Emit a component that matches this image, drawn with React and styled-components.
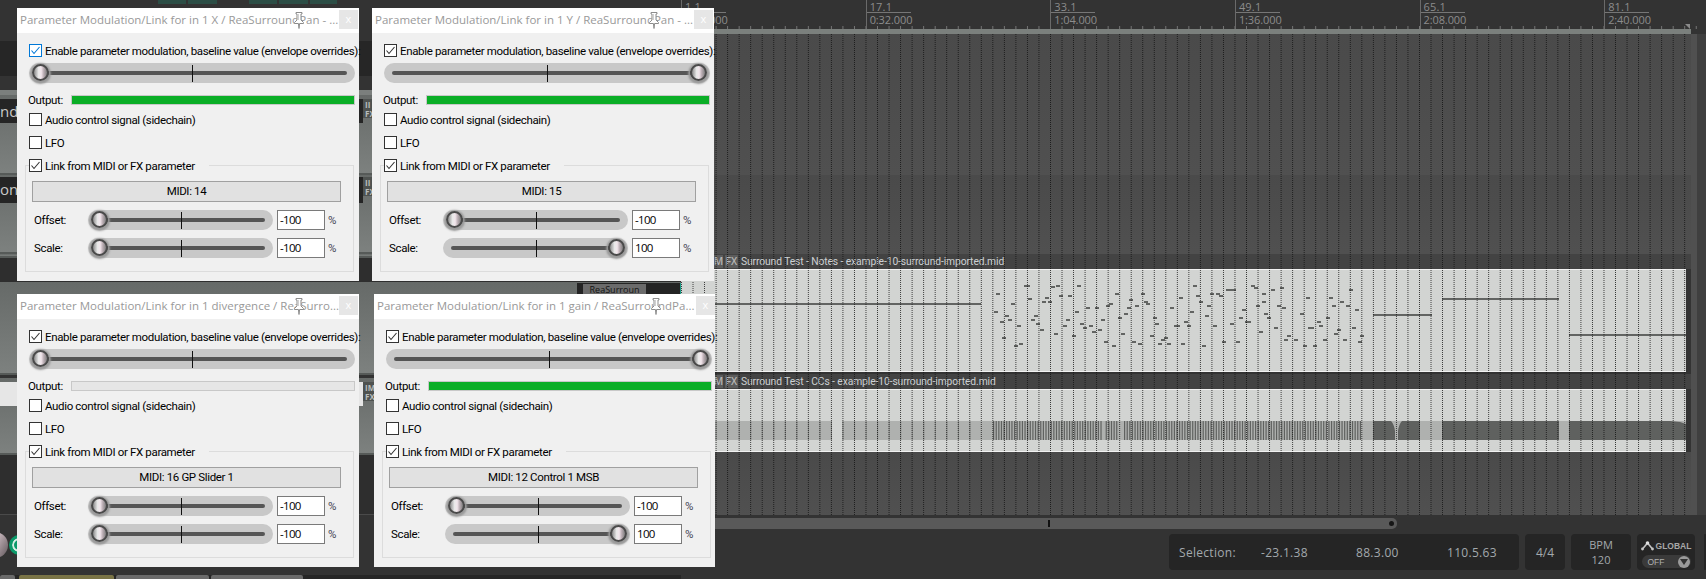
import React from "react";
import styled, { createGlobalStyle } from "styled-components";

const GlobalStyle = createGlobalStyle`
  html, body { margin: 0; padding: 0; background: #333; overflow: hidden; }
  * { box-sizing: border-box; }
`;

const BAR = 11.54;
const UI_FONT = `"Open Sans", "Liberation Sans", sans-serif`;
const DIALOG_FONT = `Roboto, "Open Sans", sans-serif`;

/* note positions read off the midi item: [x, y, width] */
const NOTES = [
  [996,293],[1024,285,6],[1028,298],[1011,303],[994,311],[1005,315],[1008,319],[1000,321],[1017,325],[1002,337],[1014,345],[1019,343],
  [1034,315],[1031,319],[1036,323],[1040,329],[1042,301],[1045,297],[1048,301],[1051,286],[1056,285],[1059,295],[1068,295],[1077,285],
  [1075,311],[1066,319],[1063,325],[1054,333],[1072,335],[1080,323],[1083,327],[1089,325],[1092,331],[1098,329],[1101,319],[1086,307],
  [1095,307],[1106,305],[1109,303],[1115,293],[1118,317],[1124,313],[1127,307],[1129,299],[1135,305],[1141,293],[1144,301],[1146,303],
  [1121,333],[1104,341],[1112,345],[1132,341],[1138,343],[1150,335],[1153,317],[1155,323],[1161,339],[1164,337],[1158,343],[1167,343],
  [1170,307],[1174,325,6],[1179,297],[1181,343],[1184,321],[1187,325],[1190,311],[1193,285],[1196,295],[1199,301],[1202,345],[1205,315],
  [1207,305],[1210,293],[1213,325],[1216,293],[1219,295],[1222,341],[1226,289,6],[1232,289],[1230,323],[1236,341],[1239,317],[1242,309],
  [1245,321,6],[1251,285],[1254,287],[1262,293],[1271,289],[1280,287],[1262,301],[1256,305],[1277,305],[1282,307],[1306,297],[1329,297],
  [1340,301],[1332,305],[1346,305],[1349,289],[1355,309],[1264,313],[1267,317],[1300,313],[1326,317],[1317,321],[1319,325],[1308,327,6],
  [1274,327],[1259,331],[1287,335],[1284,339],[1294,339],[1303,345],[1313,345],[1323,339],[1337,329],[1334,333],[1343,339],[1352,327],
  [1360,335],[1358,341]
];

const denseBars = () => {
  const bars = [];
  for (let x = 993; x < 1360; x += 2.62) {
    if ((x > 1101 && x < 1104) || (x > 1118 && x < 1122)) continue;
    bars.push(x);
  }
  return bars;
};

const Page = styled.div`
  position: relative;
  width: 1706px;
  height: 579px;
  display: flex;
  overflow: hidden;
  font-family: ${UI_FONT};
`;

/* ---------- track control panel, mostly hidden by the dialogs ---------- */
const TcpColumn = styled.div`
  width: 681px;
  flex: none;
  display: flex;
  flex-direction: column;
`;
const TopBar = styled.div`
  height: 41px;
  background: #333;
  display: flex;
  padding-left: 158px;
  gap: 2px;
`;
const Chip = styled.div`
  width: ${(p) => p.$w}px;
  height: 4px;
  margin-right: ${(p) => p.$gap || 0}px;
  background: #2c4d45;
`;
const DarkBand = styled.div`
  height: ${(p) => p.$h}px;
  background: ${(p) => p.$bg};
  border-bottom: ${(p) => (p.$line ? "1px solid #4a4a4a" : "none")};
`;
const Track = styled.div`
  height: ${(p) => p.$h}px;
  background: linear-gradient(#666a68, #7d817f);
  border-bottom: 2px solid #565a58;
  display: flex;
  align-items: flex-start;
  padding-top: ${(p) => p.$pad}px;
  padding-left: ${(p) => (p.$name ? 0 : 363)}px;
`;
const TrackName = styled.div`
  width: 363px;
  height: ${(p) => p.$h}px;
  background: ${(p) => (p.$light ? "#e6e6e6" : "#252525")};
  color: #c8c8c8;
  font-size: 15px;
  line-height: 24px;
  white-space: nowrap;
`;
const FxButton = styled.div`
  width: 18px;
  height: 19px;
  background: #4e5250;
  color: #b9bdbb;
  font-size: 8px;
  font-weight: 700;
  line-height: 9px;
  padding: 1px 0 0 2px;
`;
const FxPanel = styled.div`
  margin-left: auto;
  width: 104px;
  height: 14px;
  padding: 1px 0 0 6px;
  background: #242424;
  border-right: 1px solid #1c9c86;
`;
const FxName = styled.div`
  width: 63px;
  height: 11px;
  background: #6b6b6b;
  color: #141414;
  font-size: 9px;
  line-height: 11px;
  text-align: center;
  white-space: nowrap;
`;
const KnobRow = styled.div`
  height: 60px;
  background: #333;
  display: flex;
  align-items: center;
  gap: 1px;
`;
const Knob = styled.div`
  width: 26px;
  height: 26px;
  margin-left: -18px;
  border-radius: 50%;
  background: linear-gradient(120deg, #8f7f86, #c2b2b8 45%, #5f5559);
`;
const GreenKnob = styled.div`
  width: 20px;
  height: 20px;
  border-radius: 50%;
  background: #0c9a6a;
  border: 3px solid #0c9a6a;
  box-shadow: inset 0 0 0 2px #d8efe6;
`;
const Tabs = styled.div`
  height: 4px;
  display: flex;
  gap: 2px;
  background: #262626;
`;
const Tab = styled.div`
  width: ${(p) => p.$w}px;
  margin-left: ${(p) => p.$ml || 0}px;
  background: ${(p) => p.$bg};
  border-radius: 2px 2px 0 0;
`;

/* ---------- arrange view ---------- */
const ArrangeColumn = styled.div`
  flex: 1;
  min-width: 0;
  display: flex;
  flex-direction: column;
`;
const Ruler = styled.div`
  position: relative;
  height: 29px;
  display: flex;
  background-color: #333;
  background-image: linear-gradient(to right, #777 1px, transparent 1px);
  background-size: ${BAR}px 3px;
  background-position: 0 bottom;
  background-repeat: repeat-x;
`;
const RulerMark = styled.div`
  width: ${BAR * 16}px;
  flex: none;
  border-left: 1px solid #6a6a6a;
  padding: 0 0 0 3px;
  color: #8c8c8c;
  font-size: 11px;
  line-height: 12px;
`;
const MarkLabel = styled.div`
  width: 44px;
  height: 13px;
  border-bottom: 1px solid #767676;
  line-height: 12px;
  margin-left: -3px;
  padding-left: 3px;
  padding-top: 1px;
  letter-spacing: 0.2px;
`;
const MarkTime = styled.div`
  margin-top: 1px;
  letter-spacing: -0.1px;
`;
const EndMarker = styled.div`
  position: absolute;
  left: 1004px;
  top: 24px;
  width: 0;
  height: 0;
  border-left: 5px solid transparent;
  border-top: 5px solid #8a8a8a;
`;
const RulerBand = styled.div`
  height: 5px;
  width: 1010px;
  background: #7b807d;
`;
const Lanes = styled.div`
  position: relative;
  height: 481px;
  display: flex;
`;
const LaneColumn = styled.div`
  width: 1010px;
  flex: none;
  display: flex;
  flex-direction: column;
`;
const RailLight = styled.div`
  width: 6px;
  background: #505050;
`;
const RailDark = styled.div`
  flex: 1;
  background: #3f3f3f;
`;
const EmptyLane = styled.div`
  height: ${(p) => p.$h}px;
  background: linear-gradient(#4a4a4a, #505050);
`;
const ItemHead = styled.div`
  height: ${(p) => p.$h}px;
  display: flex;
  align-items: center;
  gap: 2px;
  padding-left: 33px;
  background: #434343;
  color: #cdd1d3;
  font-family: ${DIALOG_FONT};
  font-size: 10.3px;
  letter-spacing: -0.1px;
  white-space: nowrap;
  border-top: ${(p) => (p.$first ? "2px solid #505050" : "none")};
`;
const HeadButton = styled.div`
  width: ${(p) => p.$w}px;
  height: 13px;
  background: #5c5c5c;
  color: #b5b5b5;
  font-family: ${UI_FONT};
  font-size: 10px;
  font-weight: 600;
  line-height: 13px;
  text-align: center;
`;
const ItemTitle = styled.div`
  margin-left: 1px;
`;
const ItemBody = styled.div`
  width: 1005px;
  height: ${(p) => p.$h}px;
  background: #d2d4d2;
  border-top: 1px solid #f2f2f2;
  border-bottom: 1px solid #f2f2f2;
  svg { display: block; }
`;
const ItemGap = styled.div`
  height: 2px;
  background: #333;
`;
const GridDots = styled.div`
  position: absolute;
  left: 0;
  top: 0;
  bottom: 0;
  width: 1005px;
  opacity: 0.8;
  background-image: linear-gradient(to right, #111 1px, transparent 1px);
  background-size: ${BAR}px 100%;
  mask-image: repeating-linear-gradient(to bottom, #000 0 1px, transparent 1px 2px);
  pointer-events: none;
`;

const BottomStripe = styled.div`
  height: 3px;
  background: #333;
`;
const ScrollBar = styled.div`
  position: relative;
  width: 716px;
  height: 11px;
  background: #595959;
  border-radius: 0 5px 5px 0;
`;
const ScrollMark = styled.div`
  position: absolute;
  left: 367px;
  top: 2px;
  width: 2px;
  height: 7px;
  background: #111;
`;
const ScrollEnd = styled.div`
  position: absolute;
  right: 3px;
  top: 3px;
  width: 5px;
  height: 5px;
  border-radius: 50%;
  background: #161616;
`;
const StatusBar = styled.div`
  flex: 1;
  background: #333;
  display: flex;
  align-items: flex-start;
  justify-content: flex-end;
  gap: 6px;
  padding-top: 5px;
`;
const StatusBox = styled.div`
  width: ${(p) => p.$w}px;
  height: 36px;
  flex: none;
  margin-left: ${(p) => p.$ml || 0}px;
  border-radius: 4px;
  background: #252525;
  color: #a3a9ad;
  font-size: 12px;
  display: flex;
  flex-direction: ${(p) => (p.$stack ? "column" : "row")};
  align-items: center;
  justify-content: center;
`;
const SelectionBox = styled(StatusBox)`
  justify-content: flex-start;
  letter-spacing: 0.3px;
  padding-left: 10px;
`;
const SelectionValue = styled.span`
  width: ${(p) => p.$w}px;
  flex: none;
`;
const BpmLine = styled.div`
  font-size: 11px;
  line-height: 15px;
`;
const GlobalTop = styled.div`
  display: flex;
  align-items: center;
  gap: 2px;
  height: 15px;
  margin-top: 2px;
  color: #a8a8a8;
  font-size: 8.5px;
  font-weight: 700;
  font-family: "Liberation Sans", sans-serif;
`;
const GlobalPill = styled.div`
  width: 49px;
  height: 13px;
  margin-top: 2px;
  padding: 0 1px 0 6px;
  border-radius: 7px;
  background: #3a3a3a;
  display: flex;
  align-items: center;
  justify-content: space-between;
  color: #b0b0b0;
  font-size: 8.5px;
  font-family: "Liberation Sans", sans-serif;
`;
const PillArrow = styled.div`
  width: 12px;
  height: 12px;
  border-radius: 50%;
  background: #9a9a9a;
  display: flex;
  align-items: center;
  justify-content: center;
  &::after {
    content: "";
    border-left: 4px solid transparent;
    border-right: 4px solid transparent;
    border-top: 6px solid #333;
  }
`;

/* ---------- floating dialogs ---------- */
const Dialog = styled.div`
  position: absolute;
  left: ${(p) => p.$x}px;
  top: ${(p) => p.$y}px;
  width: ${(p) => p.$w}px;
  height: 273px;
  background: #f0f0f0;
  color: #000;
  font-family: ${DIALOG_FONT};
  font-size: 11.5px;
  letter-spacing: -0.35px;
`;
const TitleBar = styled.div`
  position: relative;
  height: 25px;
  background: #fff;
  color: #999;
  font-family: ${UI_FONT};
  font-size: 11.5px;
  line-height: 24px;
  padding-left: 3px;
  white-space: nowrap;
  overflow: hidden;
  letter-spacing: 0;
`;
const CloseButton = styled.div`
  position: absolute;
  left: 322px;
  top: 2px;
  width: 19px;
  height: 19px;
  background: #e6e6e6;
  color: #fff;
  font-size: 11px;
  line-height: 18px;
  text-align: center;
`;
const PinIcon = styled.svg`
  position: absolute;
  left: 276px;
  top: 4px;
`;
const DialogBody = styled.div`
  display: flex;
  flex-direction: column;
  padding-top: 11px;
`;
const CheckRow = styled.label`
  display: flex;
  align-items: center;
  gap: 3px;
  height: 13px;
  margin: ${(p) => p.$mt || 0}px 0 0 12px;
  white-space: nowrap;
`;
const Box = styled.span`
  width: 13px;
  height: 13px;
  flex: none;
  background: #fff;
  border: 1px solid ${(p) => (p.$hover ? "#0078d7" : "#333")};
  display: flex;
  svg { display: block; }
`;
const SliderTrack = styled.div`
  position: relative;
  width: ${(p) => p.$w}px;
  height: 20px;
  flex: none;
  border-radius: 10px;
  background: #c8c8c8;
  display: flex;
  align-items: center;
  padding: 0 8px;
  margin: ${(p) => (p.$main ? "6px 0 0 12px" : "0")};
`;
const SliderLine = styled.div`
  flex: 1;
  height: 4px;
  border-radius: 2px;
  background: #555;
`;
const SliderTick = styled.div`
  position: absolute;
  left: 50%;
  top: 2px;
  width: 1px;
  height: 17px;
  background: #111;
`;
const SliderThumb = styled.div`
  position: absolute;
  left: ${(p) => (p.$end ? "auto" : "3px")};
  right: ${(p) => (p.$end ? "3px" : "auto")};
  top: 1px;
  width: 17px;
  height: 17px;
  border-radius: 50%;
  border: 2px solid #4a4a4a;
  background: linear-gradient(90deg, #8a8a8a, #e9e9e9 35%, #f2e6ec 55%, #b9acb2 75%, #7e7e7e);
  box-shadow: 0 1px 2px 2px #9a9a9a;
`;
const OutputRow = styled.div`
  display: flex;
  align-items: center;
  height: 12px;
  margin: 11px 0 0 11px;
`;
const OutputLabel = styled.div`
  width: 43px;
  flex: none;
`;
const Meter = styled.div`
  width: 284px;
  height: 10px;
  border: 1px solid #c8c8c8;
  background: ${(p) => (p.$on ? "#0aae26" : "#e6e6e6")};
`;
const Group = styled.fieldset`
  margin: 10px 0 0 8px;
  padding: 0 0 0 6px;
  width: 329px;
  height: 113px;
  border: 1px solid #dcdcdc;
  min-width: 0;
`;
const GroupLegend = styled.legend`
  margin-left: -3px;
  padding: 0 14px 0 0;
  height: 13px;
`;
const LegendRow = styled(CheckRow)`
  margin: 0;
`;
const MidiButton = styled.div`
  width: 309px;
  height: 21px;
  margin-top: 9px;
  background: #e1e1e1;
  border: 1px solid #a0a0a0;
  text-align: center;
  line-height: 19px;
`;
const ParamRow = styled.div`
  display: flex;
  align-items: center;
  height: 20px;
  margin-top: ${(p) => p.$mt}px;
`;
const ParamLabel = styled.div`
  width: 56px;
  flex: none;
  padding-left: 2px;
`;
const ValueBox = styled.div`
  width: 48px;
  height: 20px;
  flex: none;
  margin-left: 4px;
  padding-left: 2px;
  background: #fff;
  border: 1px solid #7a7a7a;
  font-family: ${UI_FONT};
  font-size: 11.5px;
  line-height: 18px;
  letter-spacing: -0.7px;
`;
const Percent = styled.div`
  margin-left: 3px;
  color: #445;
`;

const Check = () => (
  <svg width="11" height="11" viewBox="0 0 11 11">
    <path d="M1.5 5.5 L4 8.5 L9.5 2" fill="none" stroke="#333" strokeWidth="1.1" />
  </svg>
);

const HoverCheck = () => (
  <svg width="11" height="11" viewBox="0 0 11 11">
    <path d="M1.5 5.5 L4 8.5 L9.5 2" fill="none" stroke="#0078d7" strokeWidth="1.1" />
  </svg>
);

const Pin = () => (
  <PinIcon width="12" height="17" viewBox="0 0 12 17">
    <path
      d="M3 .5 H9 V2 H8 V8 L10.5 10.5 V11.5 H6.6 L6 16.5 L5.4 11.5 H1.5 V10.5 L4 8 V2 H3 Z"
      fill="#fff"
      stroke="#8c8c8c"
      strokeWidth="1"
    />
    <path d="M5.5 2 V8" stroke="#d0d0d0" fill="none" />
  </PinIcon>
);

const Slider = ({ width, end, main }) => (
  <SliderTrack $w={width} $main={main}>
    <SliderLine />
    <SliderTick />
    <SliderThumb $end={end} />
  </SliderTrack>
);

const ParamDialog = ({ x, y, w = 342, title, hover, baseEnd, on, midi, scale }) => (
  <Dialog $x={x} $y={y} $w={w}>
    <TitleBar>
      {title}
      <Pin />
      <CloseButton>x</CloseButton>
    </TitleBar>
    <DialogBody>
      <CheckRow>
        <Box $hover={hover}>{hover ? <HoverCheck /> : <Check />}</Box>
        Enable parameter modulation, baseline value (envelope overrides):
      </CheckRow>
      <Slider width={326} end={baseEnd} main />
      <OutputRow>
        <OutputLabel>Output:</OutputLabel>
        <Meter $on={on} />
      </OutputRow>
      <CheckRow $mt={7}>
        <Box />
        Audio control signal (sidechain)
      </CheckRow>
      <CheckRow $mt={10}>
        <Box />
        LFO
      </CheckRow>
      <Group>
        <GroupLegend>
          <LegendRow as="span">
            <Box>
              <Check />
            </Box>
            Link from MIDI or FX parameter
          </LegendRow>
        </GroupLegend>
        <MidiButton>{midi}</MidiButton>
        <ParamRow $mt={8}>
          <ParamLabel>Offset:</ParamLabel>
          <Slider width={185} />
          <ValueBox>-100</ValueBox>
          <Percent>%</Percent>
        </ParamRow>
        <ParamRow $mt={8}>
          <ParamLabel>Scale:</ParamLabel>
          <Slider width={185} end={scale > 0} />
          <ValueBox>{scale}</ValueBox>
          <Percent>%</Percent>
        </ParamRow>
      </Group>
    </DialogBody>
  </Dialog>
);

const GlobalIcon = () => (
  <svg width="13" height="10" viewBox="0 0 13 10">
    <path d="M1.5 8 L6.5 2 L11.5 8" fill="none" stroke="#c4c4c4" strokeWidth="1.6" />
    <circle cx="6.5" cy="2" r="1.8" fill="#e0e0e0" />
    <circle cx="1.5" cy="8" r="1.4" fill="#c4c4c4" />
    <circle cx="11.5" cy="8" r="1.4" fill="#c4c4c4" />
  </svg>
);

const App = () => {
  const barLines = [];
  for (let i = 3; i * BAR < 300; i++) barLines.push(681 + i * BAR);

  return (
    <Page>
      <GlobalStyle />
      <TcpColumn>
        <TopBar>
          <Chip $w={28} />
          <Chip $w={29} $gap={30} />
          <Chip $w={28} />
          <Chip $w={29} />
          <Chip $w={27} />
        </TopBar>
        <DarkBand $h={35} $bg="#262626" />
        <DarkBand $h={14} $bg="#333" />
        <DarkBand $h={5} $bg="#7b7f7d" />
        <Track $h={80} $pad={4} $name>
          <TrackName $h={24}>nd</TrackName>
          <FxButton>II<br />FX</FxButton>
        </Track>
        <Track $h={79} $pad={2} $name>
          <TrackName $h={26}>one</TrackName>
          <FxButton>II<br />FX</FxButton>
        </Track>
        <Track $h={4} $pad={0} />
        <DarkBand $h={24} $bg="#2e2e2e" />
        <Track $h={93} $pad={1}>
          <FxPanel>
            <FxName>ReaSurroun</FxName>
          </FxPanel>
        </Track>
        <DarkBand $h={3} $bg="#333" />
        <Track $h={77} $pad={4} $name>
          <TrackName $h={24} $light />
          <FxButton>IM<br />FX</FxButton>
        </Track>
        <DarkBand $h={60} $bg="#2e2e2e" $line />
        <KnobRow>
          <Knob />
          <GreenKnob />
        </KnobRow>
        <Tabs>
          <Tab $w={15} $bg="#6a6a6a" />
          <Tab $w={95} $ml={2} $bg="#7a7446" />
          <Tab $w={93} $bg="#6b6b6b" />
          <Tab $w={92} $bg="#6b6b6b" />
        </Tabs>
      </TcpColumn>

      <ArrangeColumn>
        <Ruler>
          <RulerMark><MarkLabel>1.1</MarkLabel><MarkTime>0:00.000</MarkTime></RulerMark>
          <RulerMark><MarkLabel>17.1</MarkLabel><MarkTime>0:32.000</MarkTime></RulerMark>
          <RulerMark><MarkLabel>33.1</MarkLabel><MarkTime>1:04.000</MarkTime></RulerMark>
          <RulerMark><MarkLabel>49.1</MarkLabel><MarkTime>1:36.000</MarkTime></RulerMark>
          <RulerMark><MarkLabel>65.1</MarkLabel><MarkTime>2:08.000</MarkTime></RulerMark>
          <RulerMark><MarkLabel>81.1</MarkLabel><MarkTime>2:40.000</MarkTime></RulerMark>
          <EndMarker />
        </Ruler>
        <RulerBand />
        <Lanes>
          <LaneColumn>
            <EmptyLane $h={141} />
            <EmptyLane $h={77} />
            <ItemHead $h={17} $first>
              <HeadButton $w={9}>M</HeadButton>
              <HeadButton $w={13}>FX</HeadButton>
              <ItemTitle>Surround Test - Notes - example-10-surround-imported.mid</ItemTitle>
            </ItemHead>
            <ItemBody $h={103}>
              <svg width="1005" height="101" viewBox="681 270 1005 101">
                <g fill="#626462">
                  <rect x="681" y="303" width="300" height="2" />
                  <rect x="1373" y="314" width="59" height="2" />
                  <rect x="1442" y="298" width="117" height="2" />
                  <rect x="1569" y="334" width="117" height="2" />
                  {NOTES.map(([x, y, w = 4], i) => (
                    <rect key={i} x={x} y={y} width={w} height="2" />
                  ))}
                </g>
              </svg>
            </ItemBody>
            <ItemGap />
            <ItemHead $h={15}>
              <HeadButton $w={9}>M</HeadButton>
              <HeadButton $w={13}>FX</HeadButton>
              <ItemTitle>Surround Test - CCs - example-10-surround-imported.mid</ItemTitle>
            </ItemHead>
            <ItemBody $h={63}>
              <svg width="1005" height="61" viewBox="681 390 1005 61">
                <rect x="681" y="421" width="1005" height="19" fill="#afb1af" />
                <rect x="831" y="421" width="11" height="19" fill="#d2d4d2" />
                {barLines.map((x) => (
                  <rect key={x} x={x} y="421" width="1" height="19" fill="#8a8c8a" />
                ))}
                <g fill="#5f615f">
                  {denseBars().map((x) => (
                    <rect key={x} x={x} y="421" width="1.2" height="19" />
                  ))}
                  <path d="M1373 421 H1391 Q1394 424 1395 431 V440 H1398 V431 Q1399 424 1402 421 H1420 V440 H1373 Z" />
                  <rect x="1442" y="421" width="117" height="19" />
                  <path d="M1569 421 H1670 L1680 422 L1686 424 V440 H1569 Z" />
                </g>
              </svg>
            </ItemBody>
            <EmptyLane $h={63} />
          </LaneColumn>
          <RailLight />
          <RailDark />
          <GridDots />
        </Lanes>
        <BottomStripe />
        <ScrollBar>
          <ScrollMark />
          <ScrollEnd />
        </ScrollBar>
        <StatusBar>
          <SelectionBox $w={350}>
            <SelectionValue $w={82}>Selection:</SelectionValue>
            <SelectionValue $w={95}>-23.1.38</SelectionValue>
            <SelectionValue $w={91}>88.3.00</SelectionValue>
            <SelectionValue $w={60}>110.5.63</SelectionValue>
          </SelectionBox>
          <StatusBox $w={40}>4/4</StatusBox>
          <StatusBox $w={60} $stack>
            <BpmLine>BPM</BpmLine>
            <BpmLine>120</BpmLine>
          </StatusBox>
          <StatusBox $w={58} $stack>
            <GlobalTop>
              <GlobalIcon />
              GLOBAL
            </GlobalTop>
            <GlobalPill>
              OFF
              <PillArrow />
            </GlobalPill>
          </StatusBox>
          <StatusBox $w={2} $ml={3} />
        </StatusBar>
      </ArrangeColumn>

      <ParamDialog x={17} y={8} title="Parameter Modulation/Link for in 1 X / ReaSurroundPan - ..." hover on midi="MIDI: 14" scale={-100} />
      <ParamDialog x={372} y={8} title="Parameter Modulation/Link for in 1 Y / ReaSurroundPan - ..." baseEnd on midi="MIDI: 15" scale={100} />
      <ParamDialog x={17} y={294} title="Parameter Modulation/Link for in 1 divergence / ReaSurro..." midi="MIDI: 16 GP Slider 1" scale={-100} />
      <ParamDialog x={374} y={294} w={341} title="Parameter Modulation/Link for in 1 gain / ReaSurroundPa..." baseEnd on midi="MIDI: 12 Control 1 MSB" scale={100} />
    </Page>
  );
};

export default App;
